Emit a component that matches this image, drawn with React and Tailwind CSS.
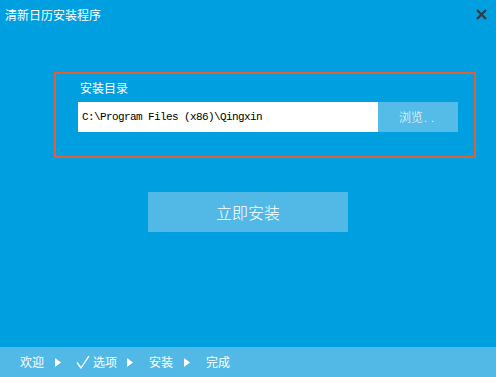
import React from "react";

const cjk = { fontFamily: '"Noto Sans CJK SC", "Noto Sans", sans-serif' };

function Tri() {
  return (
    <svg width="6" height="9" viewBox="0 0 6 9" className="block">
      <polygon points="0,0 6,4.5 0,9" fill="#ffffff" />
    </svg>
  );
}

export default function App() {
  return (
    <div
      className="w-[496px] h-[377px] bg-[#009fe0] flex flex-col text-white overflow-hidden"
      style={cjk}
    >
      <div className="h-[30px] flex items-center justify-between pl-[5px] pr-[9px]">
        <span className="text-[12px] leading-none mt-[-1px]">清新日历安装程序</span>
        <svg width="11" height="11" viewBox="0 0 11 11" className="mt-[-2px]">
          <path d="M1 1 L10 10 M10 1 L1 10" stroke="#333c44" strokeWidth="2.2" />
        </svg>
      </div>

      <div className="ml-[54px] mt-[42px] w-[422px] h-[86px] border-2 border-[#dc6138] pl-[22px] pt-[6px] flex flex-col">
        <div className="text-[12px] leading-[16px] h-[16px] pl-[2px]">安装目录</div>
        <div className="mt-[6px] flex h-[30px]">
          <div className="w-[300px] h-full bg-white flex items-center pl-[4px]">
            <span
              className="text-[11px] tracking-[-0.6px] text-black"
              style={{ fontFamily: '"Liberation Mono", "DejaVu Sans Mono", monospace' }}
            >
              C:\Program Files (x86)\Qingxin
            </span>
          </div>
          <div className="w-[80px] h-full bg-[#55bce8] flex items-center pl-[21px] text-[12px] font-light">
            浏览<span className="tracking-[4px] ml-[1px]">..</span>
          </div>
        </div>
      </div>

      <div className="ml-[148px] mt-[34px] w-[200px] h-[40px] bg-[#52b9e6] flex items-center justify-center text-[16px] font-light">
        立即安装
      </div>

      <div className="mt-auto h-[30px] bg-[#52b9e6] flex items-center text-[12px] pl-[20px]">
        <span>欢迎</span>
        <span className="ml-[11px]"><Tri /></span>
        <svg width="14" height="14" viewBox="0 0 14 14" className="ml-[15px]">
          <path d="M1 7.5 L5 13 L13 1" stroke="#ffffff" strokeWidth="1.3" fill="none" />
        </svg>
        <span className="ml-[3px]">选项</span>
        <span className="ml-[10px]"><Tri /></span>
        <span className="ml-[16px]">安装</span>
        <span className="ml-[11px]"><Tri /></span>
        <span className="ml-[16px]">完成</span>
      </div>
    </div>
  );
}
